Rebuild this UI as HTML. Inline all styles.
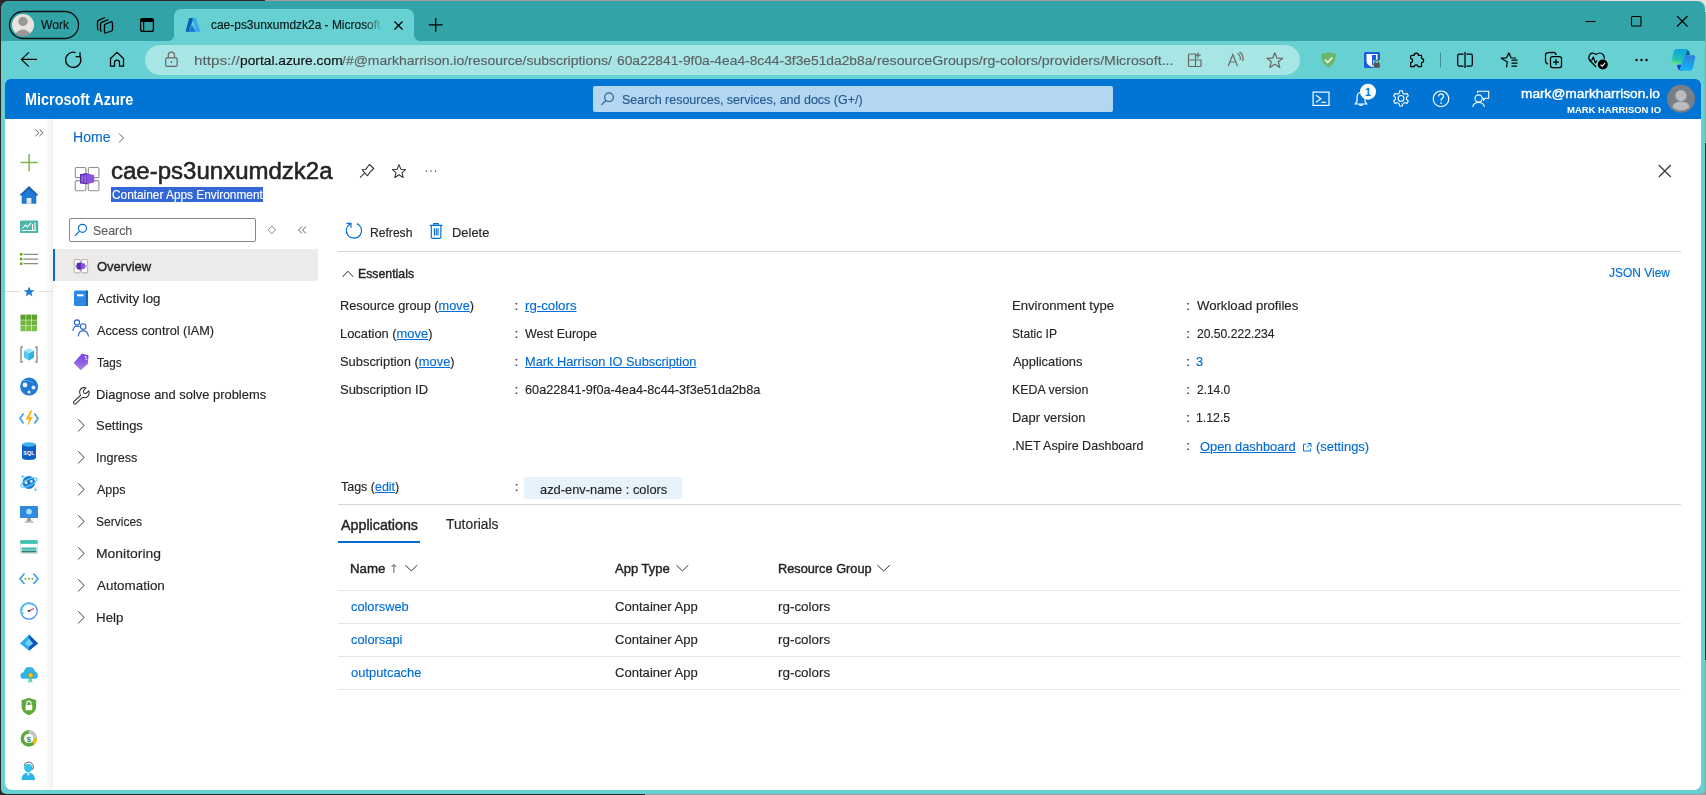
<!DOCTYPE html>
<html><head><meta charset="utf-8">
<style>
*{box-sizing:border-box;margin:0;padding:0}
html,body{width:1706px;height:795px;overflow:hidden;background:#a39c9c;font-family:"Liberation Sans",sans-serif;color:#323130}
.a{position:absolute}
.t{position:absolute;white-space:nowrap;line-height:1}
.sb{-webkit-text-stroke:0.45px currentColor}
svg.ov{position:absolute;left:0;top:0;width:1706px;height:795px;overflow:visible}
#win{left:1px;top:1px;width:1704px;height:793px;background:#66d0d2;border-radius:8px 8px 5px 5px}
#stripL{left:1px;top:1px;width:173px;height:40px;background:#32a3a6;border-radius:8px 0 6px 0}
#stripR{left:414px;top:1px;width:1291px;height:40px;background:#32a3a6;border-radius:0 8px 0 6px}
#stripT{left:170px;top:1px;width:250px;height:14px;background:#32a3a6}
#tab{left:174px;top:9px;width:240px;height:33px;background:#66d0d2;border-radius:7px 7px 0 0}
#addr{left:145px;top:45px;width:1155px;height:30px;background:#a8e5e5;border-radius:15px}
#content{left:5px;top:79px;width:1696px;height:711px;background:#fff;border-radius:5px 5px 7px 7px;overflow:hidden}
#hdr{left:0;top:0;width:1696px;height:40px;background:#0174d4;border-radius:5px 5px 0 0}
</style></head><body>
<div class="a" style="left:0;top:0;width:265px;height:795px;background:#2b2727"></div>
<div class="a" style="left:0;top:700px;width:645px;height:95px;background:#2b2727"></div>
<div class="a" style="left:1600px;top:0;width:106px;height:12px;background:#e6e0e0"></div>
<div class="a" style="left:1700px;top:143px;width:6px;height:517px;background:#2b2b2b"></div>
<div id="win" class="a"></div>
<div id="stripL" class="a"></div>
<div id="stripR" class="a"></div>
<div id="stripT" class="a"></div>
<div id="tab" class="a"></div>
<div id="addr" class="a"></div>

<!-- chrome texts -->

<div id="content" class="a">
  <div id="hdr" class="a"></div>
</div>
<!-- azure header texts -->
<div class="a" style="left:593px;top:86px;width:520px;height:26px;background:#b3d6f3;border-radius:2px"></div>

<!-- sidebar (icon column) -->
<div class="a" style="left:44px;top:119px;width:9px;height:670px;background:linear-gradient(90deg,#fff,#f1f1f1)"></div>
<div class="a" style="left:5px;top:291px;width:15px;height:1px;background:#e1dfdd"></div>
<div class="a" style="left:38px;top:291px;width:15px;height:1px;background:#e1dfdd"></div>

<!-- breadcrumb + title -->
<div class="a" style="left:111px;top:187.3px;width:152px;height:14.3px;background:#3367d6"></div>

<!-- sidebar menu -->
<div class="a" style="left:69px;top:218px;width:187px;height:24px;border:1px solid #8a8886;border-radius:2px"></div>
<div class="a" style="left:53px;top:249px;width:265px;height:32px;background:#edebe9"></div>
<div class="a" style="left:53px;top:249px;width:2px;height:32px;background:#006cd6"></div>

<!-- command bar -->
<div class="a" style="left:338px;top:251px;width:1343px;height:1px;background:#d6d6d6"></div>

<!-- essentials -->



<!-- tags -->
<div class="a" style="left:524px;top:477px;width:158px;height:21.6px;background:#e6f2fb;border-radius:2px"></div>
<div class="a" style="left:338px;top:504px;width:1343px;height:1px;background:#d6d6d6"></div>

<!-- tabs -->
<div class="a" style="left:338px;top:541px;width:82px;height:2px;background:#006cd6"></div>

<!-- table -->
<div class="a" style="left:338px;top:590px;width:1343px;height:1px;background:#e8e6e4"></div>
<div class="a" style="left:338px;top:623px;width:1343px;height:1px;background:#e8e6e4"></div>
<div class="a" style="left:338px;top:656px;width:1343px;height:1px;background:#e8e6e4"></div>
<div class="a" style="left:338px;top:689px;width:1343px;height:1px;background:#e8e6e4"></div>

<div class="t" style="left:41.05px;top:19px;font-size:12.9px;font-weight:normal;color:#0b1717;-webkit-text-stroke:0.15px currentColor;transform:scaleX(0.9383);transform-origin:0 0;">Work</div>
<div class="t" style="left:211.45px;top:19px;font-size:12.35px;font-weight:normal;color:#0b1717;-webkit-text-stroke:0.15px currentColor;transform:scaleX(0.9683);transform-origin:0 0;-webkit-mask-image:linear-gradient(90deg,#000 90%,rgba(0,0,0,0.15))">cae-ps3unxumdzk2a - Microsoft</div>
<div class="t" style="left:193.59px;top:54px;font-size:13.7px;font-weight:normal;color:#5a6162;-webkit-text-stroke:0.15px currentColor;transform:scaleX(1.1125);transform-origin:0 0;">https://</div>
<div class="t" style="left:239.69px;top:54px;font-size:13.7px;font-weight:normal;color:#0e0e0e;-webkit-text-stroke:0.15px currentColor;transform:scaleX(1.0070);transform-origin:0 0;">portal.azure.com</div>
<div class="t" style="left:342.00px;top:54px;font-size:13.7px;font-weight:normal;color:#5a6162;-webkit-text-stroke:0.15px currentColor;transform:scaleX(1.0216);transform-origin:0 0;">/#@markharrison.io/resource/subscriptions/</div>
<div class="t" style="left:616.80px;top:54px;font-size:13.7px;font-weight:normal;color:#5a6162;-webkit-text-stroke:0.15px currentColor;transform:scaleX(1.0074);transform-origin:0 0;">60a22841-9f0a-4ea4-8c44-3f3e51da2b8a/</div>
<div class="t" style="left:876.56px;top:54px;font-size:13.7px;font-weight:normal;color:#5a6162;-webkit-text-stroke:0.15px currentColor;transform:scaleX(1.0366);transform-origin:0 0;">resourceGroups/rg-colors/providers/Microsoft...</div>
<div class="t" style="left:25.08px;top:92px;font-size:15.6px;font-weight:bold;color:#fff;transform:scaleX(0.9241);transform-origin:0 0;">Microsoft Azure</div>
<div class="t" style="left:622.17px;top:93px;font-size:13.4px;font-weight:normal;color:#24598f;-webkit-text-stroke:0.15px currentColor;transform:scaleX(0.9332);transform-origin:0 0;">Search resources, services, and docs (G+/)</div>
<div class="t" style="left:1521.30px;top:87px;font-size:13.5px;font-weight:normal;color:#fff;-webkit-text-stroke:0.4px currentColor;transform:scaleX(1.0153);transform-origin:0 0;">mark@markharrison.io</div>
<div class="t" style="left:1567.00px;top:105px;font-size:9.6px;font-weight:bold;color:#fff;transform:scaleX(0.9858);transform-origin:0 0;">MARK HARRISON IO</div>
<div class="t" style="left:72.96px;top:130px;font-size:14.3px;font-weight:normal;color:#0a6cd0;-webkit-text-stroke:0.15px currentColor;transform:scaleX(0.9827);transform-origin:0 0;">Home</div>
<div class="t" style="left:110.72px;top:159px;font-size:24.5px;font-weight:normal;color:#242424;-webkit-text-stroke:0.55px currentColor;transform:scaleX(0.9801);transform-origin:0 0;">cae-ps3unxumdzk2a</div>
<div class="t" style="left:111.70px;top:189px;font-size:12.8px;font-weight:normal;color:#fff;-webkit-text-stroke:0.15px currentColor;transform:scaleX(0.9255);transform-origin:0 0;">Container Apps Environment</div>
<div class="t" style="left:93.23px;top:225px;font-size:12.8px;font-weight:normal;color:#605e5c;-webkit-text-stroke:0.15px currentColor;transform:scaleX(0.9667);transform-origin:0 0;">Search</div>
<div class="t" style="left:97.20px;top:260px;font-size:13.5px;font-weight:normal;color:#242424;-webkit-text-stroke:0.4px currentColor;transform:scaleX(0.9632);transform-origin:0 0;">Overview</div>
<div class="t" style="left:97.20px;top:292px;font-size:13.5px;font-weight:normal;color:#262524;-webkit-text-stroke:0.15px currentColor;transform:scaleX(0.9844);transform-origin:0 0;">Activity log</div>
<div class="t" style="left:97.20px;top:324px;font-size:13.5px;font-weight:normal;color:#262524;-webkit-text-stroke:0.15px currentColor;transform:scaleX(0.9403);transform-origin:0 0;">Access control (IAM)</div>
<div class="t" style="left:97.20px;top:356px;font-size:13.5px;font-weight:normal;color:#262524;-webkit-text-stroke:0.15px currentColor;transform:scaleX(0.8643);transform-origin:0 0;">Tags</div>
<div class="t" style="left:96.24px;top:388px;font-size:13.5px;font-weight:normal;color:#262524;-webkit-text-stroke:0.15px currentColor;transform:scaleX(0.9565);transform-origin:0 0;">Diagnose and solve problems</div>
<div class="t" style="left:96.24px;top:419px;font-size:13.5px;font-weight:normal;color:#262524;-webkit-text-stroke:0.15px currentColor;transform:scaleX(0.9604);transform-origin:0 0;">Settings</div>
<div class="t" style="left:96.27px;top:451px;font-size:13.5px;font-weight:normal;color:#262524;-webkit-text-stroke:0.15px currentColor;transform:scaleX(0.9326);transform-origin:0 0;">Ingress</div>
<div class="t" style="left:97.20px;top:483px;font-size:13.5px;font-weight:normal;color:#262524;-webkit-text-stroke:0.15px currentColor;transform:scaleX(0.9290);transform-origin:0 0;">Apps</div>
<div class="t" style="left:96.31px;top:515px;font-size:13.5px;font-weight:normal;color:#262524;-webkit-text-stroke:0.15px currentColor;transform:scaleX(0.8902);transform-origin:0 0;">Services</div>
<div class="t" style="left:96.17px;top:547px;font-size:13.5px;font-weight:normal;color:#262524;-webkit-text-stroke:0.15px currentColor;transform:scaleX(1.0323);transform-origin:0 0;">Monitoring</div>
<div class="t" style="left:97.20px;top:579px;font-size:13.5px;font-weight:normal;color:#262524;-webkit-text-stroke:0.15px currentColor;transform:scaleX(0.9926);transform-origin:0 0;">Automation</div>
<div class="t" style="left:96.21px;top:611px;font-size:13.5px;font-weight:normal;color:#262524;-webkit-text-stroke:0.15px currentColor;transform:scaleX(0.9889);transform-origin:0 0;">Help</div>
<div class="t" style="left:369.97px;top:226px;font-size:13px;font-weight:normal;color:#262524;-webkit-text-stroke:0.15px currentColor;transform:scaleX(0.9318);transform-origin:0 0;">Refresh</div>
<div class="t" style="left:452.41px;top:226px;font-size:13px;font-weight:normal;color:#262524;-webkit-text-stroke:0.15px currentColor;transform:scaleX(0.9944);transform-origin:0 0;">Delete</div>
<div class="t" style="left:357.92px;top:268px;font-size:12.9px;font-weight:normal;color:#242424;-webkit-text-stroke:0.4px currentColor;transform:scaleX(0.9540);transform-origin:0 0;">Essentials</div>
<div class="t" style="left:1609.10px;top:267px;font-size:12.8px;font-weight:normal;color:#006cd6;-webkit-text-stroke:0.15px currentColor;transform:scaleX(0.9348);transform-origin:0 0;">JSON View</div>
<div class="t" style="left:340.43px;top:299px;font-size:13.2px;font-weight:normal;color:#262524;-webkit-text-stroke:0.15px currentColor;transform:scaleX(0.9672);transform-origin:0 0;">Resource group (<u style="color:#006cd6;text-decoration-thickness:1px;text-underline-offset:0.6px">move</u>)</div>
<div class="t" style="left:514.50px;top:299px;font-size:13.2px;font-weight:normal;color:#262524;-webkit-text-stroke:0.15px currentColor;">:</div>
<div class="t" style="left:340.42px;top:327px;font-size:13.2px;font-weight:normal;color:#262524;-webkit-text-stroke:0.15px currentColor;transform:scaleX(0.9774);transform-origin:0 0;">Location (<u style="color:#006cd6;text-decoration-thickness:1px;text-underline-offset:0.6px">move</u>)</div>
<div class="t" style="left:514.50px;top:327px;font-size:13.2px;font-weight:normal;color:#262524;-webkit-text-stroke:0.15px currentColor;">:</div>
<div class="t" style="left:340.42px;top:355px;font-size:13.2px;font-weight:normal;color:#262524;-webkit-text-stroke:0.15px currentColor;transform:scaleX(0.9776);transform-origin:0 0;">Subscription (<u style="color:#006cd6;text-decoration-thickness:1px;text-underline-offset:0.6px">move</u>)</div>
<div class="t" style="left:514.50px;top:355px;font-size:13.2px;font-weight:normal;color:#262524;-webkit-text-stroke:0.15px currentColor;">:</div>
<div class="t" style="left:340.42px;top:383px;font-size:13.2px;font-weight:normal;color:#262524;-webkit-text-stroke:0.15px currentColor;transform:scaleX(0.9841);transform-origin:0 0;">Subscription ID</div>
<div class="t" style="left:514.50px;top:383px;font-size:13.2px;font-weight:normal;color:#262524;-webkit-text-stroke:0.15px currentColor;">:</div>
<div class="t" style="left:524.80px;top:299px;font-size:13.2px;font-weight:normal;color:#006cd6;-webkit-text-stroke:0.15px currentColor;transform:scaleX(1.0039);transform-origin:0 0;"><u style="color:#006cd6;text-decoration-thickness:1px;text-underline-offset:0.6px">rg-colors</u></div>
<div class="t" style="left:524.80px;top:327px;font-size:13.2px;font-weight:normal;color:#262524;-webkit-text-stroke:0.15px currentColor;transform:scaleX(0.9467);transform-origin:0 0;">West Europe</div>
<div class="t" style="left:525.20px;top:355px;font-size:13.2px;font-weight:normal;color:#006cd6;-webkit-text-stroke:0.15px currentColor;transform:scaleX(0.9706);transform-origin:0 0;"><u style="color:#006cd6;text-decoration-thickness:1px;text-underline-offset:0.6px">Mark Harrison IO Subscription</u></div>
<div class="t" style="left:524.80px;top:383px;font-size:13.2px;font-weight:normal;color:#262524;-webkit-text-stroke:0.15px currentColor;transform:scaleX(0.9637);transform-origin:0 0;">60a22841-9f0a-4ea4-8c44-3f3e51da2b8a</div>
<div class="t" style="left:1011.90px;top:299px;font-size:13.2px;font-weight:normal;color:#262524;-webkit-text-stroke:0.15px currentColor;transform:scaleX(0.9950);transform-origin:0 0;">Environment type</div>
<div class="t" style="left:1186.30px;top:299px;font-size:13.2px;font-weight:normal;color:#262524;-webkit-text-stroke:0.15px currentColor;">:</div>
<div class="t" style="left:1196.60px;top:299px;font-size:13.2px;font-weight:normal;color:#262524;-webkit-text-stroke:0.15px currentColor;transform:scaleX(0.9960);transform-origin:0 0;">Workload profiles</div>
<div class="t" style="left:1011.98px;top:327px;font-size:13.2px;font-weight:normal;color:#262524;-webkit-text-stroke:0.15px currentColor;transform:scaleX(0.9167);transform-origin:0 0;">Static IP</div>
<div class="t" style="left:1186.30px;top:327px;font-size:13.2px;font-weight:normal;color:#262524;-webkit-text-stroke:0.15px currentColor;">:</div>
<div class="t" style="left:1196.60px;top:327px;font-size:13.2px;font-weight:normal;color:#262524;-webkit-text-stroke:0.15px currentColor;transform:scaleX(0.9190);transform-origin:0 0;">20.50.222.234</div>
<div class="t" style="left:1012.90px;top:355px;font-size:13.2px;font-weight:normal;color:#262524;-webkit-text-stroke:0.15px currentColor;transform:scaleX(0.9761);transform-origin:0 0;">Applications</div>
<div class="t" style="left:1186.30px;top:355px;font-size:13.2px;font-weight:normal;color:#262524;-webkit-text-stroke:0.15px currentColor;">:</div>
<div class="t" style="left:1195.63px;top:355px;font-size:13.2px;font-weight:normal;color:#006cd6;-webkit-text-stroke:0.15px currentColor;transform:scaleX(0.9667);transform-origin:0 0;">3</div>
<div class="t" style="left:1011.96px;top:383px;font-size:13.2px;font-weight:normal;color:#262524;-webkit-text-stroke:0.15px currentColor;transform:scaleX(0.9388);transform-origin:0 0;">KEDA version</div>
<div class="t" style="left:1186.30px;top:383px;font-size:13.2px;font-weight:normal;color:#262524;-webkit-text-stroke:0.15px currentColor;">:</div>
<div class="t" style="left:1196.60px;top:383px;font-size:13.2px;font-weight:normal;color:#262524;-webkit-text-stroke:0.15px currentColor;transform:scaleX(0.9056);transform-origin:0 0;">2.14.0</div>
<div class="t" style="left:1011.92px;top:411px;font-size:13.2px;font-weight:normal;color:#262524;-webkit-text-stroke:0.15px currentColor;transform:scaleX(0.9808);transform-origin:0 0;">Dapr version</div>
<div class="t" style="left:1186.30px;top:411px;font-size:13.2px;font-weight:normal;color:#262524;-webkit-text-stroke:0.15px currentColor;">:</div>
<div class="t" style="left:1195.67px;top:411px;font-size:13.2px;font-weight:normal;color:#262524;-webkit-text-stroke:0.15px currentColor;transform:scaleX(0.9314);transform-origin:0 0;">1.12.5</div>
<div class="t" style="left:1012.35px;top:439px;font-size:13.2px;font-weight:normal;color:#262524;-webkit-text-stroke:0.15px currentColor;transform:scaleX(0.9504);transform-origin:0 0;">.NET Aspire Dashboard</div>
<div class="t" style="left:1186.30px;top:439px;font-size:13.2px;font-weight:normal;color:#262524;-webkit-text-stroke:0.15px currentColor;">:</div>
<div class="t" style="left:1200.30px;top:440px;font-size:13.2px;font-weight:normal;color:#006cd6;-webkit-text-stroke:0.15px currentColor;transform:scaleX(0.9745);transform-origin:0 0;"><u style="color:#006cd6;text-decoration-thickness:1px;text-underline-offset:0.6px">Open dashboard</u></div>
<div class="t" style="left:1316.32px;top:440px;font-size:13.2px;font-weight:normal;color:#006cd6;-webkit-text-stroke:0.15px currentColor;transform:scaleX(0.9792);transform-origin:0 0;">(settings)</div>
<div class="t" style="left:341.24px;top:480px;font-size:13.2px;font-weight:normal;color:#262524;-webkit-text-stroke:0.15px currentColor;transform:scaleX(0.9452);transform-origin:0 0;">Tags (<u style="color:#006cd6;text-decoration-thickness:1px;text-underline-offset:0.6px">edit</u>)</div>
<div class="t" style="left:514.70px;top:480px;font-size:13.2px;font-weight:normal;color:#262524;-webkit-text-stroke:0.15px currentColor;">:</div>
<div class="t" style="left:539.80px;top:483px;font-size:13.2px;font-weight:normal;color:#262524;-webkit-text-stroke:0.15px currentColor;transform:scaleX(0.9754);transform-origin:0 0;">azd-env-name : colors</div>
<div class="t" style="left:340.50px;top:518px;font-size:14px;font-weight:normal;color:#242424;-webkit-text-stroke:0.4px currentColor;transform:scaleX(1.0197);transform-origin:0 0;">Applications</div>
<div class="t" style="left:446.40px;top:517px;font-size:14px;font-weight:normal;color:#262524;-webkit-text-stroke:0.15px currentColor;transform:scaleX(0.9868);transform-origin:0 0;">Tutorials</div>
<div class="t" style="left:349.76px;top:563px;font-size:12.8px;font-weight:normal;color:#242424;-webkit-text-stroke:0.4px currentColor;transform:scaleX(1.0364);transform-origin:0 0;">Name</div>
<div class="t" style="left:614.70px;top:563px;font-size:12.8px;font-weight:normal;color:#242424;-webkit-text-stroke:0.4px currentColor;transform:scaleX(1.0185);transform-origin:0 0;">App Type</div>
<div class="t" style="left:777.70px;top:563px;font-size:12.8px;font-weight:normal;color:#242424;-webkit-text-stroke:0.4px currentColor;transform:scaleX(0.9968);transform-origin:0 0;">Resource Group</div>
<div class="t" style="left:350.70px;top:600px;font-size:13.2px;font-weight:normal;color:#006cd6;-webkit-text-stroke:0.15px currentColor;transform:scaleX(0.9712);transform-origin:0 0;">colorsweb</div>
<div class="t" style="left:614.80px;top:600px;font-size:13.2px;font-weight:normal;color:#262524;-webkit-text-stroke:0.15px currentColor;transform:scaleX(0.9916);transform-origin:0 0;">Container App</div>
<div class="t" style="left:777.68px;top:600px;font-size:13.2px;font-weight:normal;color:#262524;-webkit-text-stroke:0.15px currentColor;transform:scaleX(1.0180);transform-origin:0 0;">rg-colors</div>
<div class="t" style="left:350.70px;top:633px;font-size:13.2px;font-weight:normal;color:#006cd6;-webkit-text-stroke:0.15px currentColor;transform:scaleX(0.9750);transform-origin:0 0;">colorsapi</div>
<div class="t" style="left:614.80px;top:633px;font-size:13.2px;font-weight:normal;color:#262524;-webkit-text-stroke:0.15px currentColor;transform:scaleX(0.9916);transform-origin:0 0;">Container App</div>
<div class="t" style="left:777.68px;top:633px;font-size:13.2px;font-weight:normal;color:#262524;-webkit-text-stroke:0.15px currentColor;transform:scaleX(1.0180);transform-origin:0 0;">rg-colors</div>
<div class="t" style="left:350.70px;top:666px;font-size:13.2px;font-weight:normal;color:#006cd6;-webkit-text-stroke:0.15px currentColor;transform:scaleX(0.9806);transform-origin:0 0;">outputcache</div>
<div class="t" style="left:614.80px;top:666px;font-size:13.2px;font-weight:normal;color:#262524;-webkit-text-stroke:0.15px currentColor;transform:scaleX(0.9916);transform-origin:0 0;">Container App</div>
<div class="t" style="left:777.68px;top:666px;font-size:13.2px;font-weight:normal;color:#262524;-webkit-text-stroke:0.15px currentColor;transform:scaleX(1.0180);transform-origin:0 0;">rg-colors</div>
<svg class="ov" viewBox="0 0 1706 795">
 <!-- profile pill -->
 <rect x="9.5" y="11.5" width="69" height="27" rx="13.5" fill="none" stroke="#0b1414" stroke-width="1.3"/>
 <circle cx="23" cy="25" r="11" fill="#e8e4e2"/>
 <circle cx="23" cy="21.5" r="4.7" fill="#9c9896"/>
 <path d="M15.5 33.5 Q23 25.5 30.5 33.5 A11 11 0 0 1 15.5 33.5Z" fill="#9c9896"/>
 <!-- workspaces icon -->
 <g fill="none" stroke="#000" stroke-width="1.3" stroke-linejoin="round">
  <path d="M105 17.5 L98.5 20.3 Q97.5 20.8 97.5 22 V28.5 Q97.5 29.5 98.5 29.8"/>
  <path d="M108.5 19.5 L101.5 22.3 Q100.5 22.8 100.5 24 V30.5 Q100.5 31.3 101.5 31.3"/>
  <path d="M104.5 24.5 L111 21.8 Q112.5 21.5 112.5 23 V29.5 Q112.5 30.5 111.5 31 L105.5 33 Q104.5 33.3 104.5 32 Z"/>
 </g>
 <!-- vertical tabs icon -->
 <rect x="140.6" y="18.6" width="12.8" height="12.8" rx="2" fill="none" stroke="#000" stroke-width="1.3"/>
 <rect x="140.6" y="18.6" width="12.8" height="3.5" rx="1" fill="#000"/>
 <line x1="143.6" y1="21" x2="143.6" y2="31.4" stroke="#000" stroke-width="1.2"/>
 <!-- azure logo in tab -->
 <path d="M189.2 18 L193.6 18 L188.6 31.8 L185.6 31.8 Z" fill="#0b5cb5"/>
 <path d="M191.8 24.8 L196 31.8 L187.6 31.8 L190 29.6 Z" fill="#1577d6"/>
 <path d="M192.4 18 L195.8 18 L200.4 31.8 L196.2 31.8 Z" fill="#35aaf0"/>
 <!-- tab close -->
 <path d="M394.5 21.5 L402.5 29.5 M402.5 21.5 L394.5 29.5" stroke="#000" stroke-width="1.3"/>
 <!-- new tab plus -->
 <path d="M435.7 18 V31.7 M428.8 24.8 H442.5" stroke="#000" stroke-width="1.3"/>
 <!-- window controls -->
 <path d="M1585.5 21.5 H1595.5" stroke="#000" stroke-width="1.1"/>
 <rect x="1631.5" y="16.5" width="9.5" height="9.5" rx="1" fill="none" stroke="#000" stroke-width="1.1"/>
 <path d="M1677 16 L1687.5 26.5 M1687.5 16 L1677 26.5" stroke="#000" stroke-width="1.1"/>
 <!-- back / refresh / home -->
 <g fill="none" stroke="#000" stroke-width="1.25">
  <path d="M21.3 59.4 H37 M28.8 52.4 L21.5 59.4 L28.8 66.6"/>
  <path d="M79.8 56 A7.6 7.6 0 1 1 75.5 52.6"/>
  <path d="M80 52.3 V56.5 H75.6"/>
  <path d="M110.5 66.2 V58.5 L117 52.4 L123.5 58.5 V66.2 H119.5 V62.5 A2.5 2.5 0 0 0 114.5 62.5 V66.2 Z"/>
 </g>
 <!-- lock -->
 <g fill="none" stroke="#6b6664" stroke-width="1.2">
  <rect x="165.7" y="57.8" width="11.4" height="8.6" rx="1.2"/>
  <path d="M168.3 57.8 V55.3 A3.1 3.1 0 0 1 174.5 55.3 V57.8"/>
 </g>
 <circle cx="171.4" cy="62" r="0.9" fill="#6b6664"/>
 <!-- address bar right icons -->
 <g fill="none" stroke="#6b6664" stroke-width="1.2">
  <path d="M1195.5 54 H1189.5 Q1188.5 54 1188.5 55 V65.5 Q1188.5 66.5 1189.5 66.5 H1200 Q1201 66.5 1201 65.5 V60 H1195.5 Z M1188.5 60 H1195.5 V66.5"/>
  <path d="M1198 52.5 V58 M1195.3 55.2 H1200.7"/>
  <path d="M1228.2 66 L1232.8 54.5 L1237.5 66 M1229.8 62 H1235.8"/>
  <path d="M1237.5 53.5 Q1241 55.5 1240.2 60 M1239.5 52 Q1244 55 1242.8 61"/>
  <path d="M1274.8 52.8 L1277 58.2 L1282.6 58.4 L1278.3 61.8 L1279.8 67.5 L1274.8 64.3 L1269.8 67.5 L1271.3 61.8 L1267 58.4 L1272.6 58.2 Z" stroke-linejoin="round"/>
 </g>
 <!-- extension: adguard shield -->
 <path d="M1328.5 52 Q1324.5 53.8 1321 53.5 Q1320.8 63.5 1328.5 67.7 Q1336.2 63.5 1336 53.5 Q1332.5 53.8 1328.5 52Z" fill="#6cb76a"/>
 <path d="M1325 59.8 L1327.7 62.5 L1332.3 57.5" fill="none" stroke="#fff" stroke-width="1.4"/>
 <!-- bitwarden -->
 <rect x="1364" y="52" width="16" height="16" rx="1.5" fill="#175ddc"/>
 <path d="M1366.5 54 H1377.5 V61 Q1377.5 65 1372 67 Q1366.5 65 1366.5 61Z" fill="#fff"/>
 <path d="M1372 55 H1376 V61 Q1376 63.5 1372 65.5Z" fill="#175ddc"/>
 <rect x="1373" y="60" width="7.5" height="8" fill="#66d0d2"/>
 <rect x="1373.8" y="63" width="6" height="4.8" rx="0.6" fill="#555"/>
 <path d="M1375.2 63 V61.8 A1.6 1.6 0 0 1 1378.4 61.8 V63" fill="none" stroke="#555" stroke-width="1"/>
 <!-- puzzle -->
 <path d="M1412 55.3 H1414.2 A2.1 2.1 0 1 1 1418.4 55.3 H1421.5 V58.3 A2.1 2.1 0 1 1 1421.5 62.5 V66.7 H1418 A1.9 1.9 0 1 0 1414.2 66.7 H1410.6 V62.6 A1.9 1.9 0 1 0 1410.6 58.6 V56.7 Q1410.6 55.3 1412 55.3Z" fill="none" stroke="#000" stroke-width="1.2" stroke-linejoin="round"/>
 <line x1="1440.5" y1="52.5" x2="1440.5" y2="67.5" stroke="#3f8d8f" stroke-width="1"/>
 <!-- split screen -->
 <g fill="none" stroke="#000" stroke-width="1.25">
  <path d="M1463.5 54.2 H1459.3 Q1457.7 54.2 1457.7 55.8 V64.5 Q1457.7 66 1459.3 66 H1463.5"/>
  <path d="M1466.5 54.2 H1470.8 Q1472.3 54.2 1472.3 55.8 V64.5 Q1472.3 66 1470.8 66 H1466.5"/>
  <path d="M1465 52 V68"/>
 </g>
 <!-- favorites -->
 <g fill="none" stroke="#000" stroke-width="1.25" stroke-linejoin="round">
  <path d="M1508.8 52.8 L1511 57.8 L1516 58 M1506.5 67.5 L1507.3 62 L1501.3 58.2 L1506.6 57.8 L1508.8 52.8"/>
  <path d="M1511.5 60 H1517.5 M1511.5 63 H1517.5 M1511.5 66 H1517"/>
 </g>
 <!-- collections -->
 <g fill="none" stroke="#000" stroke-width="1.25">
  <path d="M1548 64 Q1545.5 63.5 1545.5 60.5 V55 Q1545.5 52.5 1548 52.5 L1553.5 52.3 Q1556 52.5 1556 55"/>
  <rect x="1550.5" y="56.5" width="11" height="11" rx="2"/>
  <path d="M1556 59 V65 M1553 62 H1559"/>
 </g>
 <!-- browser essentials (heart) -->
 <path d="M1596 67 L1589.8 60.5 Q1588 58 1589.5 55 Q1592 51.5 1596 54.5 Q1600 51.5 1603 54.5 Q1604.8 56.5 1604.3 59 M1588.8 60 H1592 L1593.3 57 L1595.3 63 L1596.8 60.5" fill="none" stroke="#000" stroke-width="1.2" stroke-linejoin="round"/>
 <circle cx="1602.8" cy="64.5" r="5" fill="#000"/>
 <path d="M1600.5 64.6 L1602.2 66.2 L1605.2 62.8" fill="none" stroke="#fff" stroke-width="1.1"/>
 <!-- more -->
 <circle cx="1636.5" cy="60" r="1.2" fill="#000"/><circle cx="1641.5" cy="60" r="1.2" fill="#000"/><circle cx="1646.5" cy="60" r="1.2" fill="#000"/>
 <!-- copilot -->
 <defs>
  <linearGradient id="cp1" x1="0.3" y1="0" x2="0.1" y2="1"><stop offset="0" stop-color="#0ea5e0"/><stop offset="0.65" stop-color="#20c4b0"/><stop offset="1" stop-color="#6ee27a"/></linearGradient>
  <linearGradient id="cp2" x1="0.7" y1="0" x2="0.5" y2="1"><stop offset="0" stop-color="#2a7fe0"/><stop offset="1" stop-color="#17b4f5"/></linearGradient>
 </defs>
 <path d="M1684.4 49.2 Q1688.5 48.6 1689.6 53 L1690 55 L1684 55.5Z" fill="#0a5d9c"/>
 <path d="M1682.6 70.8 Q1678.5 71.4 1677.4 67 L1676.8 64.8 L1683 64.5Z" fill="#1546c8"/>
 <path d="M1677 49 H1686.5 Q1688 49 1687.4 50.5 L1682 64.2 H1673.5 Q1671 64.2 1671.4 61.8 L1673.6 52 Q1674.4 49 1677 49Z" fill="url(#cp1)"/>
 <path d="M1689.6 70.8 H1680.5 Q1679 70.8 1679.6 69.3 L1685 55.2 H1693 Q1695.6 55.2 1695.2 57.6 L1693 67.8 Q1692.3 70.8 1689.6 70.8Z" fill="url(#cp2)"/>
 <!-- header search icon -->
 <g fill="none" stroke="#2c5a8a" stroke-width="1.2">
  <circle cx="609" cy="97.2" r="4.3"/>
  <path d="M606 100.3 L601.5 104.8"/>
 </g>
 <!-- cloud shell -->
 <g fill="none" stroke="#fff" stroke-width="1.2">
  <rect x="1313.1" y="92.1" width="15.9" height="13.3"/>
  <path d="M1316 95.2 L1320.9 98.8 L1316 102.3 M1321.5 102.3 H1325.8"/>
 </g>
 <!-- bell -->
 <g fill="none" stroke="#fff" stroke-width="1.2">
  <path d="M1355.3 104 H1366.7 L1365 101.5 V97.5 Q1365 92.5 1361 92.5 Q1357 92.5 1357 97.5 V101.5 Z"/>
  <path d="M1359.3 104.2 A1.8 1.8 0 0 0 1362.7 104.2"/>
 </g>
 <circle cx="1368" cy="91.7" r="8" fill="#fff"/>
 <text x="1368" y="95.8" font-family="Liberation Sans" font-size="10.5" font-weight="bold" fill="#0174d4" text-anchor="middle">1</text>
 <!-- gear -->
 <g fill="none" stroke="#fff" stroke-width="1.1">
  <path d="M1399.6 90.8 H1402.4 L1402.9 93.2 L1404.6 94.2 L1406.9 93.4 L1408.3 95.8 L1406.5 97.4 V99.4 L1408.3 101 L1406.9 103.4 L1404.6 102.6 L1402.9 103.6 L1402.4 106 H1399.6 L1399.1 103.6 L1397.4 102.6 L1395.1 103.4 L1393.7 101 L1395.5 99.4 V97.4 L1393.7 95.8 L1395.1 93.4 L1397.4 94.2 L1399.1 93.2 Z" stroke-linejoin="round"/>
  <circle cx="1401" cy="98.4" r="2.9"/>
 </g>
 <!-- help -->
 <circle cx="1441" cy="98.8" r="7.8" fill="none" stroke="#fff" stroke-width="1.2"/>
 <path d="M1438.6 96.5 Q1438.6 93.8 1441 93.8 Q1443.4 93.8 1443.4 96.3 Q1443.4 97.8 1441.8 98.7 Q1441 99.3 1441 100.8" fill="none" stroke="#fff" stroke-width="1.2"/>
 <circle cx="1441" cy="103" r="0.85" fill="#fff"/>
 <!-- feedback -->
 <g fill="none" stroke="#fff" stroke-width="1.1">
  <circle cx="1478.6" cy="98.5" r="3.6"/>
  <path d="M1472.8 107 Q1473.5 102.5 1478.6 102.5 Q1483.7 102.5 1484.4 107"/>
  <path d="M1477.5 93 V91.3 H1488.7 V98.3 H1485.3 L1483.5 100.2 V98.3 H1483"/>
 </g>
 <!-- avatar -->
 <circle cx="1681" cy="98.8" r="14" fill="#7a7f86"/>
 <circle cx="1681" cy="95.6" r="5.6" fill="#b9bbbe"/>
 <path d="M1672.4 107.5 Q1673 101.5 1681 101.5 Q1689 101.5 1689.6 107.5 A14 14 0 0 1 1672.4 107.5Z" fill="#b9bbbe"/>
 <!-- ===== icon column ===== -->
 <path d="M35.5 129.5 L39 132.7 L35.5 136 M39.5 129.5 L43 132.7 L39.5 136" fill="none" stroke="#605e5c" stroke-width="1"/>
 <path d="M29.1 154 V171.2 M20.5 162.6 H37.7" stroke="#7ab648" stroke-width="1.5"/>
 <path d="M29 186.3 L38.3 195.2 L36.3 195.2 V203.8 H21.7 V195.2 H19.7 Z" fill="#1f7ad3"/>
 <path d="M29 186.3 L38.3 195.2 L36.3 195.2 L29 188.5 L21.7 195.2 H19.7 Z" fill="#0f5aa8"/>
 <rect x="26.6" y="198" width="4.8" height="5.8" fill="#e8e8e8"/>
 <rect x="20" y="220.5" width="18.2" height="12.6" rx="1" fill="#4eb6a9"/>
 <path d="M22 230.5 H36 M22.5 228.5 L25.5 225 L27.5 227 L31 222.8 M32.5 231 V224 M35 231 V222.5" fill="none" stroke="#fff" stroke-width="1.1"/>
 <path d="M23.5 254.3 H38.2 M23.5 259.1 H38.2 M23.5 263.7 H38.2" stroke="#8a8a8a" stroke-width="1.2"/>
 <rect x="20" y="253.1" width="2.4" height="2.4" fill="#57a300"/>
 <rect x="20" y="257.9" width="2.4" height="2.4" fill="#57a300"/>
 <rect x="20" y="262.5" width="2.4" height="2.4" fill="#57a300"/>
 <path d="M29.1 286.5 L30.6 290.2 L34.5 290.3 L31.4 292.7 L32.5 296.5 L29.1 294.3 L25.7 296.5 L26.8 292.7 L23.7 290.3 L27.6 290.2Z" fill="#1f7ad3"/>
 <!-- all resources grid -->
 <g fill="#5ba32b">
  <rect x="20.5" y="314.6" width="5.2" height="5.2"/><rect x="26.2" y="314.6" width="5.2" height="5.2"/><rect x="31.9" y="314.6" width="5.2" height="5.2"/>
  <rect x="20.5" y="320.3" width="5.2" height="5.2" fill="#6fb33b"/><rect x="26.2" y="320.3" width="5.2" height="5.2" fill="#6fb33b"/><rect x="31.9" y="320.3" width="5.2" height="5.2" fill="#6fb33b"/>
  <rect x="20.5" y="326" width="5.2" height="5.2" fill="#7cbf45"/><rect x="26.2" y="326" width="5.2" height="5.2" fill="#7cbf45"/><rect x="31.9" y="326" width="5.2" height="5.2" fill="#7cbf45"/>
 </g>
 <!-- resource groups -->
 <path d="M23 347 H21 V362 H23 M35 347 H37 V362 H35" fill="none" stroke="#949494" stroke-width="1.5"/>
 <path d="M29 348.5 L34 351 V357.5 L29 360.5 L24 357.5 V351 Z" fill="#50c8f0"/>
 <path d="M29 348.5 L34 351 L29 353.6 L24 351 Z" fill="#9be4fa"/>
 <path d="M29 353.6 L34 351 V357.5 L29 360.5Z" fill="#32b0e0"/>
 <!-- app services globe -->
 <circle cx="29.1" cy="386.6" r="9" fill="#1f7ad3"/>
 <circle cx="25" cy="385" r="2.4" fill="#e8f2fb"/><circle cx="33.5" cy="387.5" r="2" fill="#e8f2fb"/><circle cx="29" cy="392" r="1.6" fill="#e8f2fb"/>
 <path d="M22 380.5 Q28 379 33 383" fill="none" stroke="#5aa7ea" stroke-width="1"/>
 <!-- functions -->
 <path d="M23.5 413.5 L20 418.5 L23.5 423.5 M34.5 413.5 L38 418.5 L34.5 423.5" fill="none" stroke="#32a4e8" stroke-width="1.6"/>
 <path d="M30.5 410.5 L25.5 419.5 H29 L27 426.6 L33 417 H29.5 L32.5 410.5Z" fill="#fcb714"/>
 <!-- sql -->
 <path d="M22 444.5 V457.5 Q22 460 29 460 Q36 460 36 457.5 V444.5Z" fill="#0b61c4"/>
 <ellipse cx="29" cy="444.5" rx="7" ry="2.2" fill="#3fb3f0"/>
 <text x="29" y="455" font-family="Liberation Sans" font-size="5.5" font-weight="bold" fill="#fff" text-anchor="middle">SQL</text>
 <!-- cosmos -->
 <circle cx="28.8" cy="482.5" r="6.4" fill="#1f7ad3"/>
 <path d="M25 484 Q24 481 26 480.5 Q27.5 481 27.5 484Z M30.5 480 Q33 479.5 33 481.5 Q31.5 483.5 30 482Z" fill="#e6e6e6"/>
 <ellipse cx="28.8" cy="482.5" rx="8.8" ry="3.2" transform="rotate(-25 28.8 482.5)" fill="none" stroke="#50d0f8" stroke-width="1.2"/>
 <path d="M22.7 474.3 L23.3 476 L25 476.6 L23.3 477.2 L22.7 478.9 L22.1 477.2 L20.4 476.6 L22.1 476Z M35.4 487.2 L36 488.9 L37.7 489.5 L36 490.1 L35.4 491.8 L34.8 490.1 L33.1 489.5 L34.8 488.9Z" fill="#50d0f8"/>
 <!-- vm -->
 <rect x="19.9" y="506" width="18.1" height="12.1" rx="0.6" fill="#2f8ae0"/>
 <path d="M27.5 518.1 H30.5 L31.5 521.3 H26.5Z" fill="#999"/>
 <rect x="24.6" y="521.3" width="8.9" height="1.4" rx="0.5" fill="#b5b5b5"/>
 <path d="M29 508.5 L31.7 510 V513.2 L29 514.8 L26.3 513.2 V510Z" fill="#a5e0fa"/>
 <!-- storage -->
 <rect x="20.3" y="540.2" width="17.4" height="13.6" fill="#d5d5d5"/>
 <rect x="21" y="543.8" width="16" height="9" fill="#fff"/>
 <rect x="20.3" y="540.2" width="17.4" height="3.6" fill="#37c2b1"/>
 <rect x="21.5" y="547.5" width="15" height="2.3" fill="#37c2b1"/>
 <rect x="21.5" y="550.5" width="15" height="2" fill="#258277"/>
 <!-- vnet -->
 <path d="M24.5 573.5 L20 578.8 L24.5 584 M33.5 573.5 L38 578.8 L33.5 584" fill="none" stroke="#2a9ae8" stroke-width="1.5"/>
 <circle cx="25.5" cy="578.8" r="1.1" fill="#7ab648"/><circle cx="29" cy="578.8" r="1.1" fill="#7ab648"/><circle cx="32.5" cy="578.8" r="1.1" fill="#7ab648"/>
 <!-- gauge -->
 <circle cx="29" cy="611" r="8.2" fill="#fff" stroke="#3a8ee6" stroke-width="1.2"/>
 <path d="M23 614.5 A6.5 6.5 0 0 1 34 606" fill="none" stroke="#50c8f0" stroke-width="2.2" stroke-dasharray="2.5 1"/>
 <path d="M29 611 L34 608.5" stroke="#e8384f" stroke-width="1.1"/>
 <circle cx="29" cy="611" r="1.1" fill="#333"/>
 <!-- entra diamond -->
 <path d="M29 634.6 L38 643.5 L29 650.7 L20 643.5Z" fill="#2fa9f0"/>
 <path d="M29 634.6 L38 643.5 L29 650.7Z" fill="#1456b8"/>
 <path d="M29 638.5 L33 643.5 L29 646.8 L25 643.5Z" fill="#6fd6f8"/>
 <!-- advisor cloud -->
 <path d="M23 678.8 Q20.5 678.8 20.5 675.5 Q20.5 672.3 23.8 672.3 Q24.5 667 29.5 667 Q34 667 35 671.5 Q37.8 672 37.8 675.3 Q37.8 678.8 35 678.8Z" fill="#32b4e6"/>
 <path d="M29.3 676.5 L28 683.2 L30.5 681.5 L32.5 683.2 L31.5 676.5Z" fill="#45d9b5"/>
 <circle cx="30.7" cy="675.2" r="2.6" fill="#fdc51a" stroke="#0a76b5" stroke-width="0.5"/>
 <!-- security shield -->
 <path d="M28.9 697.7 L36.2 700.3 V706.5 Q36.2 712.3 28.9 715.3 Q21.6 712.3 21.6 706.5 V700.3Z" fill="#5ea93b"/>
 <rect x="25.6" y="705" width="6.6" height="5.2" fill="#fff"/>
 <path d="M26.8 705 V703.2 A2.1 2.1 0 0 1 31 703.2 V705" fill="none" stroke="#fff" stroke-width="1.1"/>
 <!-- cost donut -->
 <circle cx="28.8" cy="738.5" r="6.4" fill="none" stroke="#5ea93b" stroke-width="3.6"/>
 <path d="M28.8 730.3 A8.2 8.2 0 0 1 37 738.5 L33.4 738.5 A4.6 4.6 0 0 0 28.8 733.9Z" fill="#c8c8c8"/>
 <path d="M37 738.5 A8.2 8.2 0 0 1 34.6 744.3 L32.1 741.8 A4.6 4.6 0 0 0 33.4 738.5Z" fill="#fcb714"/>
 <circle cx="28.8" cy="738.5" r="4.6" fill="#fff"/>
 <text x="28.8" y="741.5" font-family="Liberation Sans" font-size="7.5" font-weight="bold" fill="#258277" text-anchor="middle">$</text>
 <!-- support -->
 <circle cx="28.3" cy="768" r="4.2" fill="#32c4f0"/>
 <path d="M21.5 780 Q21.5 773 28.3 772.5 Q35 773 35 780Z" fill="#2cb4e8"/>
 <path d="M26.8 773.5 L28.3 776 L29.8 773.5Z" fill="#fff"/>
 <path d="M24 766 Q24.5 762 28.5 762 Q33 762.2 33.5 767 L32.5 770" fill="none" stroke="#555" stroke-width="0.9"/>
 <!-- ===== main content icons ===== -->
 <!-- resource icon -->
 <g fill="#fff" stroke="#8f8f8f" stroke-width="1.1">
  <rect x="75.3" y="167.5" width="10.6" height="10.1" rx="1.2"/>
  <rect x="88.3" y="167.5" width="10.6" height="10.1" rx="1.2"/>
  <rect x="75.3" y="180.6" width="10.6" height="10.1" rx="1.2"/>
  <rect x="88.3" y="180.6" width="10.6" height="10.1" rx="1.2"/>
 </g>
 <path d="M80 174.3 L87 173.2 L94.2 175.3 V182.3 L87 184.2 L80 183.2Z" fill="#8d52e3"/>
 <path d="M80 174.3 L87 173.2 V184.2 L80 183.2Z" fill="#5b2aab"/>
 <rect x="81.3" y="175.3" width="2" height="7" fill="#9b6ee8"/><rect x="84.3" y="174.9" width="2" height="8" fill="#9b6ee8"/>
 <!-- pin / star / more -->
 <g fill="none" stroke="#323130" stroke-width="1.05" stroke-linejoin="round">
  <path d="M362.2 169.8 L365.8 169.4 L369.3 164.5 L373.8 168.5 L369.8 172.4 L367.5 175.8 Z M364.4 173.4 L360 177.7"/>
  <path d="M399 164.6 L400.9 169.2 L405.5 169.6 L402 172.6 L403.2 177.5 L399 174.8 L394.8 177.5 L396 172.6 L392.5 169.6 L397.1 169.2Z"/>
 </g>
 <circle cx="426.5" cy="171.1" r="0.8" fill="#605e5c"/><circle cx="431" cy="171.1" r="0.8" fill="#605e5c"/><circle cx="435.4" cy="171.1" r="0.8" fill="#605e5c"/>
 <!-- close X -->
 <path d="M1658.8 165 L1670.8 177 M1670.8 165 L1658.8 177" stroke="#323130" stroke-width="1.1"/>
 <!-- breadcrumb chevron -->
 <path d="M119 133.5 L123.5 138 L119 142.5" fill="none" stroke="#605e5c" stroke-width="1"/>
 <!-- sidebar search -->
 <g fill="none" stroke="#006cd6" stroke-width="1.2">
  <circle cx="82.5" cy="228.3" r="4"/>
  <path d="M79.6 231.2 L75 235.8"/>
 </g>
 <path d="M271.8 226 L275.4 229.9 L271.8 233.8 L268.2 229.9Z" fill="none" stroke="#8a8886" stroke-width="1"/>
 <path d="M302 226.5 L298.5 230 L302 233.5 M306 226.5 L302.5 230 L306 233.5" fill="none" stroke="#605e5c" stroke-width="1"/>
 <!-- menu icons: overview -->
 <g fill="#fff" stroke="#9a9a9a" stroke-width="0.8">
  <rect x="74.2" y="259.6" width="6" height="5.9" rx="0.6"/><rect x="81.6" y="259.6" width="6" height="5.9" rx="0.6"/>
  <rect x="74.2" y="266.9" width="6" height="5.9" rx="0.6"/><rect x="81.6" y="266.9" width="6" height="5.9" rx="0.6"/>
 </g>
 <path d="M76.8 263.2 L80.8 262.5 L85 263.8 V268.5 L80.8 269.7 L76.8 269Z" fill="#8d52e3"/>
 <path d="M76.8 263.2 L80.8 262.5 V269.7 L76.8 269Z" fill="#5b2aab"/>
 <!-- activity log -->
 <path d="M75.5 290.5 H86.5 Q87.8 290.5 87.8 291.8 V304.5 Q87.8 306 86.5 306 H75.5 Q74 306 74 304.5 V292Q74 290.5 75.5 290.5Z" fill="#2d87e3"/>
 <path d="M86 290.5 H87.8 V306 H86Z" fill="#125fb5"/>
 <rect x="77" y="294.3" width="6.5" height="2" fill="#fff"/>
 <!-- access control -->
 <g fill="none" stroke="#1f62c6" stroke-width="1.1">
  <circle cx="77" cy="322.5" r="2.6"/>
  <path d="M72.8 331 Q73.5 326 77.2 326.2 Q78.5 326.2 79.5 327"/>
  <circle cx="83.2" cy="326.5" r="2.8"/>
  <path d="M78.2 336.5 Q79 330.6 83.2 330.6 Q87.5 330.6 88.5 336.5"/>
 </g>
 <!-- tags -->
 <defs><linearGradient id="tagg" x1="0" y1="0" x2="0" y2="1"><stop offset="0" stop-color="#7b3fe0"/><stop offset="1" stop-color="#a27de8"/></linearGradient></defs>
 <path d="M81.8 353.8 L87.8 355 Q88.6 355.2 88.5 356 L88 362.2 L80.8 369.5 L74 362.6 Z" fill="url(#tagg)"/>
 <path d="M74 362.6 L80.8 369.5 L88 362.2 L87.9 363.6 L80.8 370 L74.2 363.5Z" fill="#6a3ac8"/>
 <circle cx="85.6" cy="356.8" r="0.9" fill="#fff"/><circle cx="86.3" cy="359.2" r="0.7" fill="#fff"/>
 <!-- wrench -->
 <path d="M80.5 395.5 L74.2 401.2 Q72.8 402.5 73.8 403.6 Q74.8 404.6 76.2 403.3 L82.5 397.3 Q86.5 398.8 88.5 395.5 Q89.8 393 88.8 390.8 L86 393.5 L83.8 393 L83.3 390.8 L86 388 Q83.5 387 81.2 388.5 Q78.5 391 80.5 395.5Z" fill="none" stroke="#323130" stroke-width="1.05" stroke-linejoin="round"/>
 <!-- chevrons for groups -->
 <g fill="none" stroke="#3b3a39" stroke-width="1">
  <path d="M78.3 419.3 L84 425.4 L78.3 431.5"/>
  <path d="M78.3 451.3 L84 457.4 L78.3 463.5"/>
  <path d="M78.3 483.3 L84 489.4 L78.3 495.5"/>
  <path d="M78.3 515.3 L84 521.4 L78.3 527.5"/>
  <path d="M78.3 547.3 L84 553.4 L78.3 559.5"/>
  <path d="M78.3 579.3 L84 585.4 L78.3 591.5"/>
  <path d="M78.3 611.3 L84 617.4 L78.3 623.5"/>
 </g>
 <!-- refresh / delete -->
 <g fill="none" stroke="#006cd6" stroke-width="1.15">
  <path d="M350.3 223.9 A7.6 7.6 0 1 0 357 223.6"/>
  <path d="M346.5 223.3 H351 V227.8"/>
  <path d="M429.8 225.4 H442.5 M433.8 225.4 V223.6 H438.3 V225.4 M431.3 225.4 V237.2 Q431.3 238.3 432.4 238.3 H439.8 Q440.9 238.3 440.9 237.2 V225.4 M434.4 228.3 V235.5 M436.2 228.3 V235.5 M438 228.3 V235.5"/>
 </g>
 <!-- essentials chevron -->
 <path d="M342.5 277 L347.8 271.2 L353.3 277" fill="none" stroke="#323130" stroke-width="1"/>
 <!-- external link -->
 <g fill="none" stroke="#006cd6" stroke-width="0.95">
  <path d="M1306 444.2 H1303.5 V451 H1310.5 V448.5"/>
  <path d="M1307.5 443.5 H1311 V447 M1311 443.5 L1306.8 447.7"/>
 </g>
 <!-- table sort -->
 <path d="M393.9 564.5 V573 M391.5 567 L393.9 564.5 L396.3 567" fill="none" stroke="#605e5c" stroke-width="1"/>
 <g fill="none" stroke="#323130" stroke-width="1">
  <path d="M405.5 565.2 L411.3 571 L417.2 565.2"/>
  <path d="M676.5 565.2 L682.4 571 L688.3 565.2"/>
  <path d="M877.5 565.2 L883.6 571 L889.8 565.2"/>
 </g>
</svg>
</body></html>
